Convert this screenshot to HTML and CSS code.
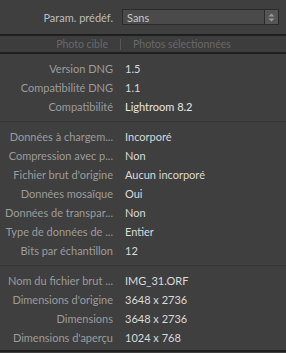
FILE: index.html
```html
<!DOCTYPE html>
<html>

<head>
    <title>Métadonnées DNG</title>
    <link rel="stylesheet" href="styles.css">
</head>

<body>
    <div class="panel">
        <!-- Preset selector -->
        <div class="preset-row">
            <div class="label">Param. prédéf.</div>
            <div class="preset-select">
                <span class="preset-value">Sans</span>
                <span class="preset-arrow">
                    <svg width="7" height="9" viewBox="0 0 7 9">
                        <path d="M3.5 0.5 L6.5 3.5 L0.5 3.5 Z M3.5 8.5 L6.5 5.5 L0.5 5.5 Z" fill="#9a9a9a"/>
                    </svg>
                </span>
            </div>
        </div>

        <!-- Target tabs -->
        <div class="target-tabs">
            <span class="tab">Photo cible</span>
            <span class="tab-sep"></span>
            <span class="tab">Photos sélectionnées</span>
        </div>

        <div class="group">
            <div class="row"><div class="label">Version DNG</div><div class="value">1.5</div></div>
            <div class="row"><div class="label">Compatibilité DNG</div><div class="value">1.1</div></div>
            <div class="row"><div class="label">Compatibilité</div><div class="value bright">Lightroom 8.2</div></div>
        </div>

        <div class="group">
            <div class="row"><div class="label">Données à chargem...</div><div class="value">Incorporé</div></div>
            <div class="row"><div class="label">Compression avec p...</div><div class="value">Non</div></div>
            <div class="row"><div class="label">Fichier brut d'origine</div><div class="value">Aucun incorporé</div></div>
            <div class="row"><div class="label">Données mosaïque</div><div class="value">Oui</div></div>
            <div class="row"><div class="label">Données de transpar...</div><div class="value">Non</div></div>
            <div class="row"><div class="label">Type de données de ...</div><div class="value">Entier</div></div>
            <div class="row"><div class="label">Bits par échantillon</div><div class="value">12</div></div>
        </div>

        <div class="group last">
            <div class="row"><div class="label">Nom du fichier brut ...</div><div class="value">IMG_31.ORF</div></div>
            <div class="row"><div class="label">Dimensions d'origine</div><div class="value">3648 x 2736</div></div>
            <div class="row"><div class="label">Dimensions</div><div class="value">3648 x 2736</div></div>
            <div class="row"><div class="label">Dimensions d'aperçu</div><div class="value">1024 x 768</div></div>
        </div>
    </div>
</body>

</html>
```

FILE: styles.css
```css
/* Whole panel */
body {
    margin: 0;
    background: #3f3f3f;
    font-family: Lato, "Open Sans", sans-serif;
    font-size: 11px;
}

.panel {
    width: 286px;
    height: 353px;
    overflow: hidden;
    background: #3f3f3f;
}

/* Label / value columns */
.label {
    width: 113px;
    flex: none;
    text-align: right;
    color: #9c9c9c;
    white-space: nowrap;
}

.value {
    margin-left: 12px;
    color: #dadada;
    white-space: nowrap;
}

.value.bright {
    color: #e6e6e6;
}

/* Preset selector row */
.preset-row {
    display: flex;
    align-items: center;
    height: 34px;
}

.preset-row .label {
    color: #bdbdbd;
}

.preset-select {
    display: flex;
    align-items: center;
    margin-left: 9px;
    width: 157px;
    height: 16px;
    box-sizing: border-box;
    border: 1px solid #2a2a2a;
    background: #4a4a4a;
}

.preset-value {
    flex: 1;
    padding-left: 4px;
    color: #c8c8c8;
}

.preset-arrow {
    display: flex;
    align-items: center;
    justify-content: center;
    width: 13px;
    height: 14px;
    background: #555555;
    border-left: 1px solid #2a2a2a;
}

/* Target tabs */
.target-tabs {
    display: flex;
    align-items: center;
    height: 16px;
    border-top: 2px solid #1f1f1f;
    border-bottom: 2px solid #1f1f1f;
    background: #3d3d3d;
    color: #696969;
    font-size: 10.5px;
}

.tab:first-child {
    width: 108px;
    text-align: right;
}

.tab-sep {
    width: 1px;
    height: 11px;
    margin: 0 12px;
    background: #575757;
}

/* Metadata groups */
.group {
    padding: 5px 0;
    border-bottom: 1px solid #353535;
}

.group.last {
    padding-bottom: 3px;
    border-bottom: 2px solid #1f1f1f;
}

.row {
    display: flex;
    align-items: center;
    height: 19px;
}
```
